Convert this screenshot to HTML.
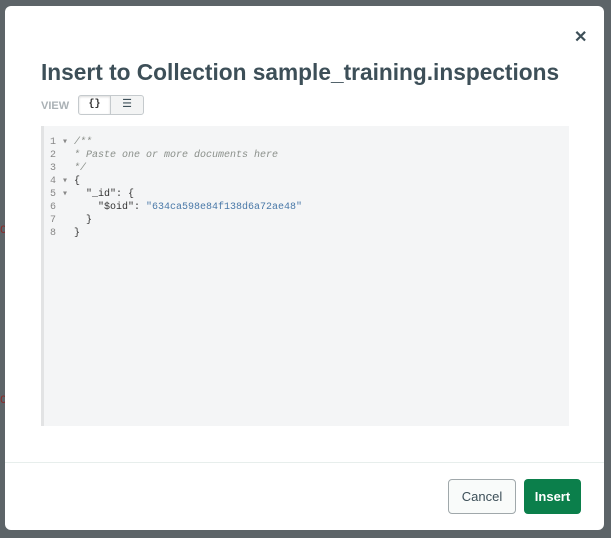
<!DOCTYPE html>
<html><head><style>
body{margin:0;width:611px;height:538px;background:#5d6468;position:relative;overflow:hidden;font-family:"Liberation Sans",sans-serif}
.bgtxt{position:absolute;left:0;font:11px "Liberation Mono",monospace;color:#2a2f33}
.modal{position:absolute;left:5px;top:6px;width:599px;height:524px;background:#fff;border-radius:6px}
h1{position:absolute;left:36px;top:53px;margin:0;font-size:22.7px;font-weight:bold;color:#3d4f58;letter-spacing:0}
.close{position:absolute;left:569px;top:21px;font-size:16px;font-weight:bold;color:#3d4f58}
.view{position:absolute;left:36px;top:94px;font-size:11px;font-weight:bold;color:#aab1b5}
.tg{position:absolute;top:89px;height:20px;border:1px solid #c5cacd;background:#f3f4f4;box-sizing:border-box}
.ed{position:absolute;left:36px;top:120px;width:528px;height:300px;background:#f4f5f6;border-left:3px solid #e2e3e4;box-sizing:border-box}
.code{position:absolute;left:6px;top:10px;font:10px/13px "Liberation Mono",monospace;color:#333;white-space:pre}
.ln{color:#888}
.cm{color:#8a8f8a;font-style:italic}
.st{color:#4a79a8}
.sep{position:absolute;left:0;top:456px;width:599px;height:1px;background:#e7eeec}
.btn{position:absolute;top:473px;height:35px;border-radius:4px;box-sizing:border-box;font-size:13px;display:flex;align-items:center;justify-content:center}
</style></head><body>
<div class="bgtxt" style="top:225px;color:#8b2a2a">C</div>
<div class="bgtxt" style="top:395px;color:#8b2a2a">C</div>
<div class="modal">
<div class="close">✕</div>
<h1>Insert to Collection sample_training.inspections</h1>
<div class="view">VIEW</div>
<div class="tg" style="left:73px;width:33px;border-radius:3px 0 0 3px;background:#fff;box-shadow:inset 0 1px 2px rgba(0,0,0,.15);font:bold 10px 'Liberation Mono',monospace;text-align:center;line-height:18px;color:#333">{}</div>
<div class="tg" style="left:105px;width:34px;border-radius:0 3px 3px 0;text-align:center;line-height:17px;font-size:11px;color:#3d4f58">☰</div>
<div class="ed"><div class="code"><span class="ln">1 ▾ </span><span class="cm">/**</span>
<span class="ln">2   </span><span class="cm">* Paste one or more documents here</span>
<span class="ln">3   </span><span class="cm">*/</span>
<span class="ln">4 ▾ </span>{
<span class="ln">5 ▾ </span>  "_id": {
<span class="ln">6   </span>    "$oid": <span class="st">"634ca598e84f138d6a72ae48"</span>
<span class="ln">7   </span>  }
<span class="ln">8   </span>}</div></div>
<div class="sep"></div>
<div class="btn" style="left:443px;width:68px;border:1px solid #a0a8ab;background:#f9fbfa;color:#3d4f58">Cancel</div>
<div class="btn" style="left:519px;width:57px;background:#0b7f4b;color:#fff;font-weight:bold">Insert</div>
</div>
</body></html>
